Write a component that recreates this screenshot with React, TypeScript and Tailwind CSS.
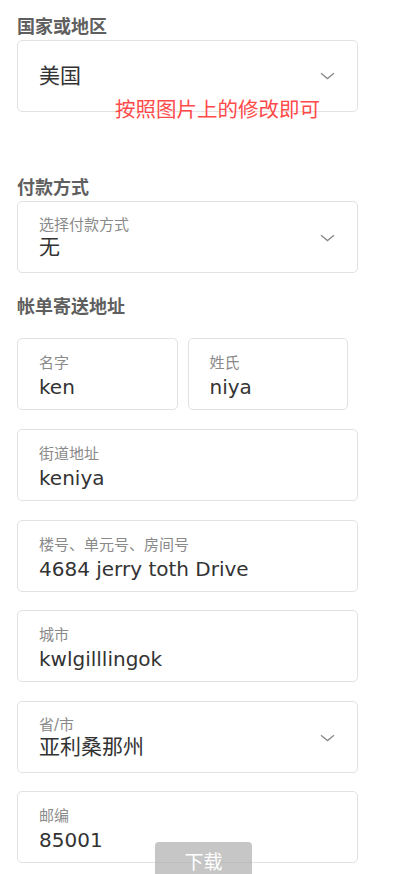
import React from 'react'

const font = { fontFamily: '"DejaVu Sans", "Noto Sans CJK SC", sans-serif' }

function Chevron() {
  return (
    <svg width="15" height="8" viewBox="0 0 15 8" className="shrink-0">
      <path d="M1 1.2 L7.5 6.6 L14 1.2" fill="none" stroke="#8a8a8a" strokeWidth="1.3" />
    </svg>
  )
}

function Field({ label, value, select, cjk, className = '' }: { label: string; value: string; select?: boolean; cjk?: boolean; className?: string }) {
  return (
    <div className={`h-[72px] border border-[#e2e2e2] rounded-[5px] bg-white flex items-start pl-[21px] pr-[22px] ${className}`}>
      <div className={`flex-1 min-w-0 flex flex-col ${cjk ? 'pt-[14px]' : 'pt-[15px]'}`}>
        <span className="text-[15px] leading-[18px] text-[#8a8a8a]">{label}</span>
        <span className={`${cjk ? 'text-[21px] leading-[24px] mt-[1px]' : 'text-[20px] leading-[24px] mt-[3px]'} text-[#333]`}>{value}</span>
      </div>
      {select && <div className="self-center mt-[2px]"><Chevron /></div>}
    </div>
  )
}

export default function App() {
  return (
    <div className="relative w-[395px] h-[874px] bg-white overflow-hidden" style={font}>
      <div className="pl-[17px] pr-[37px] pt-[15px]">
        <h3 className="text-[18px] leading-[24px] font-bold text-[#5f5f5f]">国家或地区</h3>
        <div className="relative mt-[1px]">
          <div className="h-[72px] border border-[#e2e2e2] rounded-[5px] bg-white flex items-center pl-[21px] pr-[22px]">
            <span className="flex-1 text-[21px] leading-[24px] text-[#333]">美国</span>
            <Chevron />
          </div>
          {/* overlay note */}
          <span className="absolute left-[98px] top-[58px] text-[20.5px] leading-[24px] text-[#ff4a4a] whitespace-nowrap">
            按照图片上的修改即可
          </span>
        </div>

        <h3 className="mt-[64px] text-[18px] leading-[24px] font-bold text-[#5f5f5f]">付款方式</h3>
        <Field className="mt-[1px]" label="选择付款方式" value="无" cjk select />

        <h3 className="mt-[22px] text-[18px] leading-[24px] font-bold text-[#5f5f5f]">帐单寄送地址</h3>

        <div className="mt-[19px] flex gap-[10px] pr-[10px]">
          <Field className="flex-1" label="名字" value="ken" />
          <Field className="flex-1" label="姓氏" value="niya" />
        </div>
        <Field className="mt-[19px]" label="街道地址" value="keniya" />
        <Field className="mt-[19px]" label="楼号、单元号、房间号" value="4684 jerry toth Drive" />
        <Field className="mt-[18px]" label="城市" value="kwlgilllingok" />
        <Field className="mt-[19px]" label="省/市" value="亚利桑那州" cjk select />
        <Field className="mt-[18px]" label="邮编" value="85001" />
      </div>

      <button className="absolute left-[155px] top-[842px] w-[97px] h-[40px] rounded-t-[4px] bg-[#a8a8a8]/65 text-white text-[19px] leading-[24px] pt-[8px] flex justify-center items-start">
        下载
      </button>
    </div>
  )
}
